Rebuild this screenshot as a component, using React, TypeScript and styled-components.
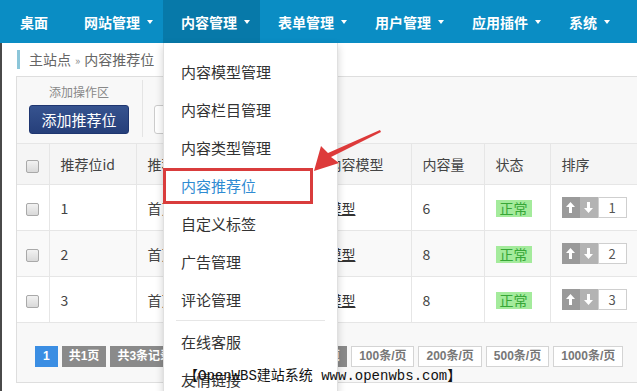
import styled, { createGlobalStyle } from 'styled-components';

const GlobalStyle = createGlobalStyle`
  html, body {
    margin: 0;
    padding: 0;
    overflow: hidden;
    background: #ffffff;
  }
  body {
    font-family: "Noto Sans CJK SC", "Liberation Sans", sans-serif;
    color: #444;
  }
`;

const Page = styled.div`
  position: relative;
  width: 637px;
  height: 391px;
  overflow: hidden;
`;

const TopNav = styled.nav`
  display: flex;
  height: 43px;
  padding-left: 2px;
  background: #0a8dc4;
`;

const NavItem = styled.div<{ $active?: boolean }>`
  position: relative;
  display: flex;
  align-items: center;
  height: 43px;
  padding: 0 10px 0 18px;
  background: ${(p) => (p.$active ? '#0779a9' : 'transparent')};
  color: #ffffff;
  font-size: 14px;
  font-weight: 700;
  white-space: nowrap;
  &:first-child {
    padding-right: 18px;
  }
`;

const Caret = styled.span`
  display: inline-block;
  margin-left: 7px;
  width: 0;
  height: 0;
  border-left: 3.5px solid transparent;
  border-right: 3.5px solid transparent;
  border-top: 4px solid #ffffff;
`;

const Dropdown = styled.div`
  position: absolute;
  top: 43px;
  left: 0;
  z-index: 5;
  width: 175px;
  height: 360px;
  padding: 10px 0;
  box-sizing: border-box;
  background: #ffffff;
  border: 1px solid rgba(0, 0, 0, 0.12);
  border-top: none;
  box-shadow: 0 3px 8px rgba(0, 0, 0, 0.18);
`;

const MenuItem = styled.div<{ $current?: boolean }>`
  height: 38px;
  line-height: 38px;
  padding-left: 17px;
  font-size: 15px;
  font-weight: 400;
  color: ${(p) => (p.$current ? '#2f8bd2' : '#333333')};
`;

const MenuDivider = styled.div`
  height: 1px;
  margin: 1px 12px 2px;
  background: #e6e6e6;
`;

const Body = styled.div`
  height: 348px;
  padding-left: 14px;
  border-left: 2px solid #4a4a4a;
`;

const Crumb = styled.div`
  display: flex;
  align-items: center;
  height: 33px;
  padding-left: 1px;
`;

const CrumbText = styled.span`
  padding-left: 9px;
  border-left: 3px solid #8cc6d9;
  line-height: 18px;
  font-size: 14px;
  color: #666;
  white-space: nowrap;
`;

const CrumbSep = styled.span`
  margin: 0 4px;
  font-size: 11px;
  color: #888;
`;

const Panel = styled.div`
  width: 680px;
  background: #f8f8f8;
  border: 1px solid #dedede;
`;

const Toolbar = styled.div`
  display: flex;
  align-items: stretch;
  padding: 6px 0 9px 12px;
`;

const Group = styled.div`
  display: flex;
  flex-direction: column;
  align-items: center;
  gap: 4px;
`;

const GroupLabel = styled.div`
  height: 18px;
  line-height: 18px;
  font-size: 12px;
  color: #888;
`;

const ToolDivider = styled.div`
  width: 1px;
  margin: -3px 11px -3px 13px;
  background: #e4e4e4;
`;

const Button = styled.button<{ $primary?: boolean }>`
  height: 29px;
  width: ${(p) => (p.$primary ? '100px' : '90px')};
  padding: 0;
  border-radius: 3px;
  font-family: inherit;
  font-size: 15px;
  color: ${(p) => (p.$primary ? '#ffffff' : '#333')};
  border: 1px solid ${(p) => (p.$primary ? '#1f3670' : '#cccccc')};
  background: ${(p) =>
    p.$primary ? 'linear-gradient(#36538f, #263f7a)' : '#ffffff'};
`;

const Table = styled.table`
  width: 653px;
  table-layout: fixed;
  border-collapse: collapse;
  background: #ffffff;
  font-size: 14px;
  color: #444;
`;

const HeadRow = styled.tr`
  height: 41px;
  background: #f5f5f5;
`;

const Row = styled.tr<{ $striped?: boolean }>`
  height: 46px;
  background: ${(p) => (p.$striped ? '#f9f9f9' : '#ffffff')};
`;

const Cell = styled.td`
  padding: 0 11px;
  border: 1px solid #e6e6e6;
  text-align: left;
  font-weight: 400;
  white-space: nowrap;
  overflow: hidden;
  &:first-child {
    padding: 0 0 0 9px;
    border-left: none;
  }
`;

const Check = styled.span`
  display: inline-block;
  width: 11px;
  height: 11px;
  vertical-align: middle;
  border: 1px solid #a9a9a9;
  border-radius: 2px;
  background: linear-gradient(#f2f2f2, #d9d9d9);
`;

const Link = styled.span`
  color: #333;
  text-decoration: underline;
`;

const Status = styled.span`
  display: inline-block;
  padding: 0 4px;
  line-height: 17px;
  background: #a4eb9c;
  color: #37a737;
`;

const Sorter = styled.div`
  display: flex;
  height: 21px;
`;

const SortBtn = styled.span<{ $shade: string }>`
  display: flex;
  align-items: center;
  justify-content: center;
  width: 18px;
  background: ${(p) => p.$shade};
`;

const SortInput = styled.span`
  width: 29px;
  box-sizing: border-box;
  border: 1px solid #cfcfcf;
  background: #fff;
  line-height: 19px;
  text-align: center;
  font-size: 13px;
  color: #555;
`;

const Footer = styled.div`
  height: 59px;
  padding: 23px 0 0 18px;
  box-sizing: border-box;
`;

const Pager = styled.div`
  display: flex;
  gap: 4px;
`;

const PageBtn = styled.span<{ $kind: 'current' | 'info' | 'plain' }>`
  height: 21px;
  box-sizing: border-box;
  padding: 0 ${(p) => (p.$kind === 'info' ? '6px' : '7px')};
  line-height: 19px;
  font-family: "Liberation Sans", "Noto Sans CJK SC", sans-serif;
  font-size: 12px;
  font-weight: 700;
  white-space: nowrap;
  color: ${(p) => (p.$kind === 'plain' ? '#777' : '#ffffff')};
  background: ${(p) =>
    p.$kind === 'current' ? '#3b8ee3' : p.$kind === 'info' ? '#8a8a8a' : '#ffffff'};
  border: 1px solid
    ${(p) => (p.$kind === 'current' ? '#3b8ee3' : p.$kind === 'info' ? '#8a8a8a' : '#d4d4d4')};
`;

const Highlight = styled.div`
  position: absolute;
  left: 163px;
  top: 168px;
  width: 150px;
  height: 36px;
  box-sizing: border-box;
  border: 3px solid #d93c3c;
  z-index: 6;
`;

const ArrowLayer = styled.svg`
  position: absolute;
  left: 0;
  top: 0;
  z-index: 7;
  pointer-events: none;
`;

const Watermark = styled.div`
  position: absolute;
  left: 184px;
  top: 367px;
  z-index: 8;
  font-family: "Liberation Mono", "Noto Sans CJK SC", monospace;
  font-size: 14px;
  line-height: 18px;
  color: #111;
  white-space: nowrap;
`;

const navs = ['网站管理', '内容管理', '表单管理', '用户管理', '应用插件', '系统'];

const menu = [
  '内容模型管理',
  '内容栏目管理',
  '内容类型管理',
  '内容推荐位',
  '自定义标签',
  '广告管理',
  '评论管理',
];

const rows = [
  { id: 1, name: '首页幻灯片', model: '模型', count: 6 },
  { id: 2, name: '首页推荐', model: '模型', count: 8 },
  { id: 3, name: '首页头条', model: '模型', count: 8 },
];

const Up = () => (
  <svg width="9" height="11" viewBox="0 0 9 11">
    <path d="M4.5 0 L9 5 H6 V11 H3 V5 H0 Z" fill="#fff" />
  </svg>
);

const Down = () => (
  <svg width="9" height="11" viewBox="0 0 9 11">
    <path d="M4.5 11 L9 6 H6 V0 H3 V6 H0 Z" fill="#fff" />
  </svg>
);

const App = () => (
  <Page>
    <GlobalStyle />
    <TopNav>
      <NavItem>桌面</NavItem>
      {navs.map((n) => (
        <NavItem key={n} $active={n === '内容管理'}>
          {n}
          <Caret />
          {n === '内容管理' && (
            <Dropdown>
              {menu.map((m) => (
                <MenuItem key={m} $current={m === '内容推荐位'}>
                  {m}
                </MenuItem>
              ))}
              <MenuDivider />
              <MenuItem>在线客服</MenuItem>
              <MenuItem>友情链接</MenuItem>
            </Dropdown>
          )}
        </NavItem>
      ))}
    </TopNav>
    <Body>
      <Crumb>
        <CrumbText>
          主站点<CrumbSep>»</CrumbSep>内容推荐位
        </CrumbText>
      </Crumb>
      <Panel>
        <Toolbar>
          <Group>
            <GroupLabel>添加操作区</GroupLabel>
            <Button $primary>添加推荐位</Button>
          </Group>
          <ToolDivider />
          <Group>
            <GroupLabel>其他操作</GroupLabel>
            <Button>批量删除</Button>
          </Group>
        </Toolbar>
        <Table>
          <colgroup>
            <col style={{ width: 32 }} />
            <col style={{ width: 87 }} />
            <col style={{ width: 180 }} />
            <col style={{ width: 95 }} />
            <col style={{ width: 73 }} />
            <col style={{ width: 66 }} />
            <col style={{ width: 120 }} />
          </colgroup>
          <thead>
            <HeadRow>
              <Cell as="th">
                <Check />
              </Cell>
              <Cell as="th">推荐位id</Cell>
              <Cell as="th">推荐位名称</Cell>
              <Cell as="th">内容模型</Cell>
              <Cell as="th">内容量</Cell>
              <Cell as="th">状态</Cell>
              <Cell as="th">排序</Cell>
            </HeadRow>
          </thead>
          <tbody>
            {rows.map((r, i) => (
              <Row key={r.id} $striped={i === 1}>
                <Cell>
                  <Check />
                </Cell>
                <Cell>{r.id}</Cell>
                <Cell>{r.name}</Cell>
                <Cell>
                  <Link>{r.model}</Link>
                </Cell>
                <Cell>{r.count}</Cell>
                <Cell>
                  <Status>正常</Status>
                </Cell>
                <Cell>
                  <Sorter>
                    <SortBtn $shade="#9a9a9a">
                      <Up />
                    </SortBtn>
                    <SortBtn $shade="#b3b3b3">
                      <Down />
                    </SortBtn>
                    <SortInput>{r.id}</SortInput>
                  </Sorter>
                </Cell>
              </Row>
            ))}
          </tbody>
        </Table>
        <Footer>
          <Pager>
            <PageBtn $kind="current">1</PageBtn>
            <PageBtn $kind="info">共1页</PageBtn>
            <PageBtn $kind="info">共3条记录</PageBtn>
            <PageBtn $kind="info">首页</PageBtn>
            <PageBtn $kind="info">上页</PageBtn>
            <PageBtn $kind="info">下页</PageBtn>
            <PageBtn $kind="info">尾页</PageBtn>
            <PageBtn $kind="plain">100条/页</PageBtn>
            <PageBtn $kind="plain">200条/页</PageBtn>
            <PageBtn $kind="plain">500条/页</PageBtn>
            <PageBtn $kind="plain">1000条/页</PageBtn>
          </Pager>
        </Footer>
      </Panel>
    </Body>
    <Highlight />
    <ArrowLayer width="637" height="391" viewBox="0 0 637 391">
      <polygon
        points="314,171 321,146 328,153 380,130 381,132 331,157 339,163"
        fill="#dd3a3a"
      />
    </ArrowLayer>
    <Watermark>【OpenWBS建站系统 www.openwbs.com】</Watermark>
  </Page>
);

export default App;
